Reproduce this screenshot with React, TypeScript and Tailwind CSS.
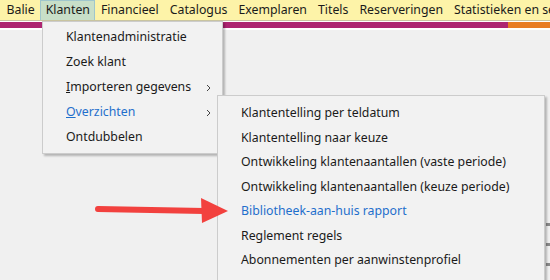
import React from 'react';

const topItems = ['Balie', 'Klanten', 'Financieel', 'Catalogus', 'Exemplaren', 'Titels', 'Reserveringen', 'Statistieken en selecties'];

const subItems = [
  'Klantentelling per teldatum',
  'Klantentelling naar keuze',
  'Ontwikkeling klantenaantallen (vaste periode)',
  'Ontwikkeling klantenaantallen (keuze periode)',
  'Bibliotheek-aan-huis rapport',
  'Reglement regels',
  'Abonnementen per aanwinstenprofiel',
];

function Chevron() {
  return (
    <svg width="5" height="8" viewBox="0 0 5 8" className="absolute right-[11px] top-1/2 -translate-y-1/2">
      <path d="M1 1 L4 4 L1 7" fill="none" stroke="#444" strokeWidth="1" />
    </svg>
  );
}

export default function App() {
  return (
    <div className="relative w-[550px] h-[280px] overflow-hidden bg-[#f0f0f0] text-[12.3px] text-[#1a1a1a]" style={{ fontFamily: '"Noto Sans", "Open Sans", sans-serif' }}>
      {/* menubar */}
      <div className="flex h-[21px] items-stretch bg-[#fdf3a8] border-b border-[#c9c4a0] pl-px whitespace-nowrap">
        {topItems.map((t) => (
          <div
            key={t}
            className={
              t === 'Klanten'
                ? 'flex items-center px-[4.5px] bg-[#c8dfc8] border border-[#9fc6cc] border-b-0'
                : 'flex items-center px-[5.5px]'
            }
          >
            {t}
          </div>
        ))}
      </div>
      <div className="h-px bg-white" />
      <div className="flex h-[6px]">
        <div className="w-[508px] bg-[#ad2571]" />
        <div className="flex-1 bg-[#e87c24]" />
      </div>
      <div className="h-[2px] bg-white" />

      {/* background marks on the right */}
      <div className="absolute right-0 top-[223px] w-[4px] h-[3px] bg-[#8a8a8a]" />
      <div className="absolute right-0 top-[243px] w-[4px] h-[3px] bg-[#8a8a8a]" />
      <div className="absolute right-0 top-[263px] w-[4px] h-[3px] bg-[#8a8a8a]" />

      {/* Klanten dropdown */}
      <div className="absolute left-[42px] top-[21px] w-[181px] bg-[#f2f2f2] border border-[#cccccc] shadow-[2px_2px_2px_rgba(0,0,0,0.25)] py-[3px]">
        <div className="relative h-[25px] flex items-center pl-[23px]">Klantenadministratie</div>
        <div className="relative h-[25px] flex items-center pl-[23px]">Zoek klant</div>
        <div className="relative h-[25px] flex items-center pl-[23px]">
          <span><span className="underline">I</span>mporteren gegevens</span>
          <Chevron />
        </div>
        <div className="relative h-[25px] flex items-center pl-[23px] text-[#1f6fcc]">
          <span><span className="underline">O</span>verzichten</span>
          <Chevron />
        </div>
        <div className="relative h-[25px] flex items-center pl-[23px]">Ontdubbelen</div>
      </div>

      {/* Overzichten submenu */}
      <div className="absolute left-[217px] top-[95px] w-[328px] h-[200px] bg-[#f2f2f2] border border-[#cccccc] shadow-[2px_2px_2px_rgba(0,0,0,0.25)] pt-[5px]">
        {subItems.map((t) => (
          <div
            key={t}
            className={
              t === 'Bibliotheek-aan-huis rapport'
                ? 'h-[24.5px] flex items-center pl-[23px] text-[#1f6fcc]'
                : 'h-[24.5px] flex items-center pl-[23px]'
            }
          >
            {t}
          </div>
        ))}
      </div>

      {/* red arrow */}
      <svg className="absolute left-[94px] top-[194px]" width="138" height="32" viewBox="0 0 138 32">
        <path d="M4 15 L110 17" stroke="#f2413e" strokeWidth="6" strokeLinecap="round" fill="none" />
        <path d="M107 4 L134 17 L108 29 Z" fill="#f2413e" />
      </svg>
    </div>
  );
}
